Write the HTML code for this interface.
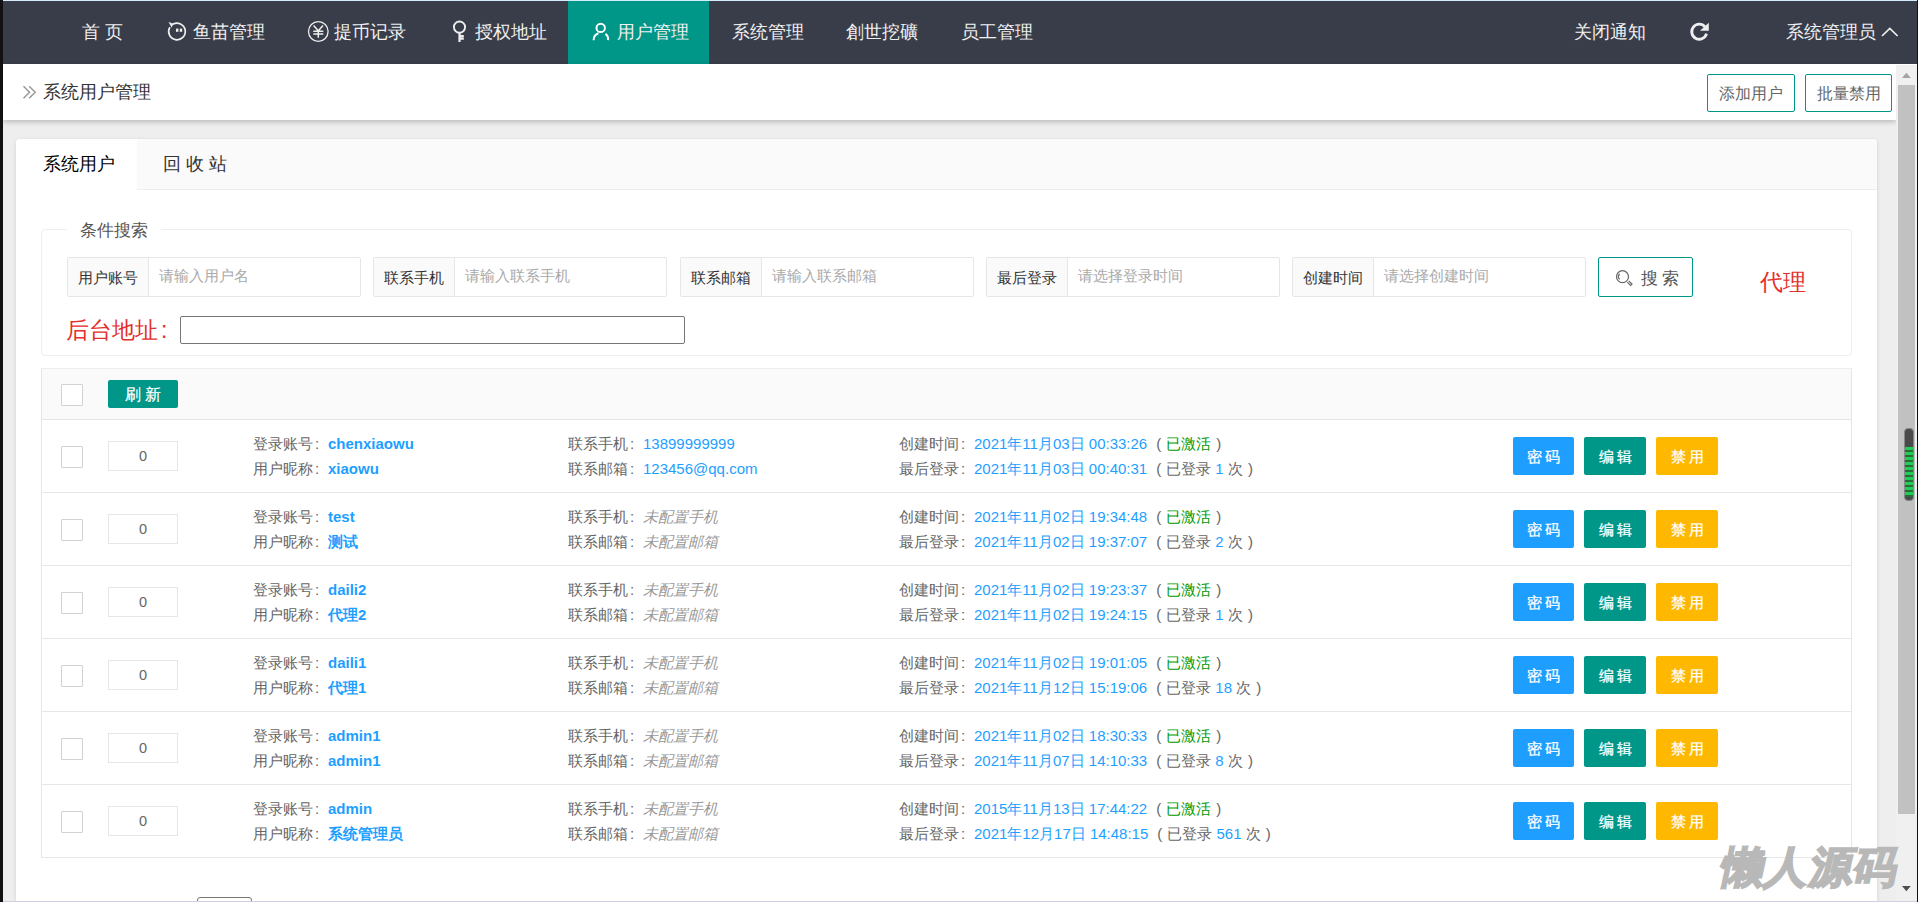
<!DOCTYPE html>
<html><head><meta charset="utf-8">
<style>
*{box-sizing:border-box;margin:0;padding:0}
html,body{width:1918px;height:902px;overflow:hidden}
body{position:relative;background:#111;font-family:"Liberation Sans",sans-serif;color:#333}
body div{position:absolute;white-space:nowrap}
.nt{top:1px;height:63px;line-height:63px;font-size:18px;color:#f0f0f0}
.btn-o{border:1px solid #009688;border-radius:2px;background:#fff;color:#555;font-size:14px;text-align:center}
.ig{top:257px;height:40px;width:294px;border:1px solid #e6e6e6;border-radius:2px;background:#fff}
.ig .lb{left:0;top:0;width:81px;height:38px;background:#fafafa;border-right:1px solid #e6e6e6;font-size:15px;color:#333;line-height:40px;text-align:center}
.ig .ph{left:91px;top:0;height:38px;line-height:36px;font-size:15px;color:#aaa}
.rl{left:41px;width:1811px;height:1px;background:#e6e6e6}
.cb{width:22px;height:22px;border:1px solid #d2d2d2;border-radius:1px;background:#fff}
.num{left:108px;width:70px;height:30px;border:1px solid #e6e6e6;text-align:center;line-height:29px;font-size:14.5px;color:#666;background:#fff}
.tx{font-size:15px;line-height:25px;color:#666}
.tx span{position:static}
.v{color:#1e9fff}
.vb{color:#1e9fff;font-weight:bold}
.i{color:#999;font-style:italic}
.g{color:#009900}
.po{padding:0 5px 0 9px}
.pc{padding:0 0 0 5px}
.bt{width:61px;height:38px;border-radius:2px;color:#fff;font-size:15px;line-height:40px;text-align:center;letter-spacing:3px;text-indent:3px;-webkit-text-stroke:0.25px #fff}
.c{display:inline-block;width:15px;padding-left:2px;font-style:normal}
.tx i.c{position:static}

</style></head><body>
<div style="left:3px;top:0;width:1914px;height:1px;background:#d4ecfb"></div>
<div style="left:3px;top:1px;width:1914px;height:63px;background:#393D49"></div>
<div style="left:568px;top:1px;width:141px;height:63px;background:#009688"></div>
<div class="nt" style="left:82px">首 页</div>
<div class="nt" style="left:193px">鱼苗管理</div>
<div class="nt" style="left:334px">提币记录</div>
<div class="nt" style="left:475px">授权地址</div>
<div class="nt" style="left:617px">用户管理</div>
<div class="nt" style="left:732px">系统管理</div>
<div class="nt" style="left:846px">創世挖礦</div>
<div class="nt" style="left:961px">员工管理</div>
<div class="nt" style="left:1574px;font-size:17.6px">关闭通知</div>
<div class="nt" style="left:1786px;font-size:17.6px">系统管理员</div>

<!-- nav icons -->
<svg style="position:absolute;left:0;top:0" width="1918" height="64" viewBox="0 0 1918 64">
 <g fill="none" stroke="#eeeeee" stroke-width="1.7" stroke-linecap="butt">
  <path d="M169.9 27.15 A8.3 8.3 0 1 0 172.8 24.3"/>
  <circle cx="318.3" cy="31.5" r="9.8" stroke-width="1.3"/>
  <path d="M313.6 25.6 L318.3 30.8 L323 25.6 M313.3 31.3 H323.3 M313.3 34 H323.3 M318.3 30.8 V37.8" stroke-width="1.5"/>
  <circle cx="459.5" cy="27.1" r="5.6" stroke-width="1.9"/>
  <path d="M459.5 32.8 V42 M459.5 36.2 H463.8 M459.5 38.6 H463.8" stroke-width="2.2"/>
  <circle cx="600.7" cy="27.9" r="4.2" stroke-width="2" stroke="#fff"/>
  <path d="M593.6 40.2 A7.2 7.2 0 0 1 598.5 33.3 M605.5 33.8 A7.2 7.2 0 0 1 608.1 40.2" stroke-width="2" stroke="#fff"/>
  <path d="M1706.5 33.6 A7.5 7.5 0 1 1 1705 26.9" stroke-width="2.8"/>
  <path d="M1882 36 L1889.8 28.4 L1897.6 36" stroke-width="1.7"/>
 </g>
 <g fill="#eeeeee">
  <path d="M168.5 22 L173.5 23.8 L171.6 27.4 Z"/>
  <rect x="176" y="28.6" width="2.4" height="3.2"/>
  <rect x="179.8" y="28.6" width="2.4" height="3.2"/>
  <path d="M1708.8 22.7 V30.7 H1700 Z"/>
 </g>
</svg>
<!-- main bg -->
<div style="left:3px;top:64px;width:1893px;height:838px;background:#eeeeee"></div>
<div style="left:3px;top:64px;width:1893px;height:56px;background:#fff;box-shadow:0 2px 5px rgba(0,0,0,.22)"></div>
<div style="left:43px;top:64px;line-height:56px;font-size:17.5px;color:#333">系统用户管理</div>
<svg style="position:absolute;left:14px;top:76px" width="30" height="30" viewBox="14 76 30 30"><path d="M23.5 86.3 L29.5 92.3 L23.5 98.3 M29.2 86.3 L35.2 92.3 L29.2 98.3" fill="none" stroke="#999" stroke-width="1.5"/></svg>
<div class="btn-o" style="left:1707px;top:74px;width:88px;height:38px;line-height:38px;font-size:16px;color:#666">添加用户</div>
<div class="btn-o" style="left:1805px;top:74px;width:87px;height:38px;line-height:38px;font-size:16px;color:#666">批量禁用</div>
<!-- card -->
<div style="left:16px;top:139px;width:1861px;height:780px;background:#fff;border-radius:4px;box-shadow:0 1px 4px rgba(0,0,0,.12)"></div>
<div style="left:16px;top:139px;width:1861px;height:51px;background:#fafafa;border-bottom:1px solid #eee;border-radius:4px 4px 0 0"></div>
<div style="left:16px;top:139px;width:121px;height:51px;background:#fff;border-radius:4px 0 0 0"></div>
<div style="left:43px;top:139px;line-height:50px;font-size:17.5px;color:#000">系统用户</div>
<div style="left:163px;top:139px;line-height:50px;font-size:17.5px;color:#333">回 收 站</div>
<div style="left:41px;top:229px;width:1811px;height:127px;border:1px solid #eee;border-radius:4px"></div>
<div style="left:67px;top:219px;padding:0 13px;background:#fff;font-size:16.5px;line-height:22px;color:#555">条件搜索</div>
<div class="ig" style="left:67px"><div class="lb">用户账号</div><div class="ph">请输入用户名</div></div>
<div class="ig" style="left:373px"><div class="lb">联系手机</div><div class="ph">请输入联系手机</div></div>
<div class="ig" style="left:680px"><div class="lb">联系邮箱</div><div class="ph">请输入联系邮箱</div></div>
<div class="ig" style="left:986px"><div class="lb">最后登录</div><div class="ph">请选择登录时间</div></div>
<div class="ig" style="left:1292px"><div class="lb">创建时间</div><div class="ph">请选择创建时间</div></div>
<div class="btn-o" style="left:1598px;top:257px;width:95px;height:40px;line-height:38px;font-size:18px;letter-spacing:6px"></div>
<svg style="position:absolute;left:1605px;top:262px" width="40" height="30" viewBox="1605 262 40 30"><g fill="none" stroke="#666" stroke-width="1.2"><circle cx="1622.5" cy="276.7" r="6"/><path d="M1619.6 274 A4 4 0 0 0 1619.6 279.4"/><path d="M1627.3 282.2 L1630.6 285.5 L1632 284.1 L1628.7 280.8"/></g></svg>
<div style="left:1641px;top:257px;line-height:44px;font-size:17px;color:#555;letter-spacing:4px">搜索</div>
<div style="left:1760px;top:268px;font-size:23px;line-height:28px;color:#e4302c">代理</div>
<div style="left:66px;top:316px;font-size:23px;line-height:28px;color:#e4302c">后台地址<span style="position:static;display:inline-block;width:20px;padding-left:3px">:</span></div>
<div style="left:180px;top:316px;width:505px;height:28px;border:1px solid #767676;border-radius:2px;background:#fff"></div>
<!-- table -->
<div style="left:41px;top:368px;width:1811px;height:490px;border:1px solid #e6e6e6;border-top:1px solid #eee;background:#fff"></div>
<div style="left:42px;top:369px;width:1809px;height:51px;background:#fafafa"></div>
<div class="cb" style="left:61px;top:384px"></div>
<div style="left:108px;top:380px;width:70px;height:28px;background:#009688;border-radius:2px;color:#fff;font-size:15.5px;line-height:30px;text-align:center;letter-spacing:4px;text-indent:4px;-webkit-text-stroke:0.2px #fff">刷新</div>
<div class="rl" style="top:419px"></div>
<div class="cb" style="left:61px;top:446px"></div>
<div class="num" style="top:441px">0</div>
<div class="tx" style="left:253px;top:431px">登录账号<i class="c">:</i><span class="vb">chenxiaowu</span><br>用户昵称<i class="c">:</i><span class="vb">xiaowu</span></div>
<div class="tx" style="left:568px;top:431px">联系手机<i class="c">:</i><span class="v">13899999999</span><br>联系邮箱<i class="c">:</i><span class="v">123456@qq.com</span></div>
<div class="tx" style="left:899px;top:431px">创建时间<i class="c">:</i><span class="v">2021年11月03日 00:33:26</span><span class="po">(</span><span class="g">已激活</span><span class="pc">)</span><br>最后登录<i class="c">:</i><span class="v">2021年11月03日 00:40:31</span><span class="po">(</span>已登录 <span class="v">1</span> 次<span class="pc">)</span></div>
<div class="bt" style="left:1513px;top:437px;background:#1E9FFF">密码</div>
<div class="bt" style="left:1584px;width:62px;top:437px;background:#009688">编辑</div>
<div class="bt" style="left:1656px;width:62px;top:437px;background:#FFB800">禁用</div>
<div class="rl" style="top:492px"></div>
<div class="cb" style="left:61px;top:519px"></div>
<div class="num" style="top:514px">0</div>
<div class="tx" style="left:253px;top:504px">登录账号<i class="c">:</i><span class="vb">test</span><br>用户昵称<i class="c">:</i><span class="vb">测试</span></div>
<div class="tx" style="left:568px;top:504px">联系手机<i class="c">:</i><span class="i">未配置手机</span><br>联系邮箱<i class="c">:</i><span class="i">未配置邮箱</span></div>
<div class="tx" style="left:899px;top:504px">创建时间<i class="c">:</i><span class="v">2021年11月02日 19:34:48</span><span class="po">(</span><span class="g">已激活</span><span class="pc">)</span><br>最后登录<i class="c">:</i><span class="v">2021年11月02日 19:37:07</span><span class="po">(</span>已登录 <span class="v">2</span> 次<span class="pc">)</span></div>
<div class="bt" style="left:1513px;top:510px;background:#1E9FFF">密码</div>
<div class="bt" style="left:1584px;width:62px;top:510px;background:#009688">编辑</div>
<div class="bt" style="left:1656px;width:62px;top:510px;background:#FFB800">禁用</div>
<div class="rl" style="top:565px"></div>
<div class="cb" style="left:61px;top:592px"></div>
<div class="num" style="top:587px">0</div>
<div class="tx" style="left:253px;top:577px">登录账号<i class="c">:</i><span class="vb">daili2</span><br>用户昵称<i class="c">:</i><span class="vb">代理2</span></div>
<div class="tx" style="left:568px;top:577px">联系手机<i class="c">:</i><span class="i">未配置手机</span><br>联系邮箱<i class="c">:</i><span class="i">未配置邮箱</span></div>
<div class="tx" style="left:899px;top:577px">创建时间<i class="c">:</i><span class="v">2021年11月02日 19:23:37</span><span class="po">(</span><span class="g">已激活</span><span class="pc">)</span><br>最后登录<i class="c">:</i><span class="v">2021年11月02日 19:24:15</span><span class="po">(</span>已登录 <span class="v">1</span> 次<span class="pc">)</span></div>
<div class="bt" style="left:1513px;top:583px;background:#1E9FFF">密码</div>
<div class="bt" style="left:1584px;width:62px;top:583px;background:#009688">编辑</div>
<div class="bt" style="left:1656px;width:62px;top:583px;background:#FFB800">禁用</div>
<div class="rl" style="top:638px"></div>
<div class="cb" style="left:61px;top:665px"></div>
<div class="num" style="top:660px">0</div>
<div class="tx" style="left:253px;top:650px">登录账号<i class="c">:</i><span class="vb">daili1</span><br>用户昵称<i class="c">:</i><span class="vb">代理1</span></div>
<div class="tx" style="left:568px;top:650px">联系手机<i class="c">:</i><span class="i">未配置手机</span><br>联系邮箱<i class="c">:</i><span class="i">未配置邮箱</span></div>
<div class="tx" style="left:899px;top:650px">创建时间<i class="c">:</i><span class="v">2021年11月02日 19:01:05</span><span class="po">(</span><span class="g">已激活</span><span class="pc">)</span><br>最后登录<i class="c">:</i><span class="v">2021年11月12日 15:19:06</span><span class="po">(</span>已登录 <span class="v">18</span> 次<span class="pc">)</span></div>
<div class="bt" style="left:1513px;top:656px;background:#1E9FFF">密码</div>
<div class="bt" style="left:1584px;width:62px;top:656px;background:#009688">编辑</div>
<div class="bt" style="left:1656px;width:62px;top:656px;background:#FFB800">禁用</div>
<div class="rl" style="top:711px"></div>
<div class="cb" style="left:61px;top:738px"></div>
<div class="num" style="top:733px">0</div>
<div class="tx" style="left:253px;top:723px">登录账号<i class="c">:</i><span class="vb">admin1</span><br>用户昵称<i class="c">:</i><span class="vb">admin1</span></div>
<div class="tx" style="left:568px;top:723px">联系手机<i class="c">:</i><span class="i">未配置手机</span><br>联系邮箱<i class="c">:</i><span class="i">未配置邮箱</span></div>
<div class="tx" style="left:899px;top:723px">创建时间<i class="c">:</i><span class="v">2021年11月02日 18:30:33</span><span class="po">(</span><span class="g">已激活</span><span class="pc">)</span><br>最后登录<i class="c">:</i><span class="v">2021年11月07日 14:10:33</span><span class="po">(</span>已登录 <span class="v">8</span> 次<span class="pc">)</span></div>
<div class="bt" style="left:1513px;top:729px;background:#1E9FFF">密码</div>
<div class="bt" style="left:1584px;width:62px;top:729px;background:#009688">编辑</div>
<div class="bt" style="left:1656px;width:62px;top:729px;background:#FFB800">禁用</div>
<div class="rl" style="top:784px"></div>
<div class="cb" style="left:61px;top:811px"></div>
<div class="num" style="top:806px">0</div>
<div class="tx" style="left:253px;top:796px">登录账号<i class="c">:</i><span class="vb">admin</span><br>用户昵称<i class="c">:</i><span class="vb">系统管理员</span></div>
<div class="tx" style="left:568px;top:796px">联系手机<i class="c">:</i><span class="i">未配置手机</span><br>联系邮箱<i class="c">:</i><span class="i">未配置邮箱</span></div>
<div class="tx" style="left:899px;top:796px">创建时间<i class="c">:</i><span class="v">2015年11月13日 17:44:22</span><span class="po">(</span><span class="g">已激活</span><span class="pc">)</span><br>最后登录<i class="c">:</i><span class="v">2021年12月17日 14:48:15</span><span class="po">(</span>已登录 <span class="v">561</span> 次<span class="pc">)</span></div>
<div class="bt" style="left:1513px;top:802px;background:#1E9FFF">密码</div>
<div class="bt" style="left:1584px;width:62px;top:802px;background:#009688">编辑</div>
<div class="bt" style="left:1656px;width:62px;top:802px;background:#FFB800">禁用</div>

<!-- scrollbar -->
<div style="left:197px;top:897px;width:55px;height:10px;border:1px solid #777;border-radius:3px;background:#fff"></div>
<div style="left:1896px;top:64px;width:21px;height:838px;background:#f0f0f0;border-top:1px solid #fff"></div>
<svg style="position:absolute;left:1896px;top:64px" width="21" height="838" viewBox="1896 64 21 838"><path d="M1902 78 L1906.4 72.8 L1910.8 78 Z" fill="#a3a3a3"/><path d="M1902 886 L1906.4 891.2 L1910.8 886 Z" fill="#505050"/></svg>
<div style="left:1898px;top:85px;width:17px;height:729px;background:#c1c1c1"></div>
<div style="left:1904px;top:428px;width:10px;height:73px;background:#4a4a4a;border-radius:4px;border:1px solid #888"></div>
<div style="left:1905px;top:447px;width:8px;height:50px;background:repeating-linear-gradient(#22cc55 0,#22cc55 3px,#2a6a3a 3px,#2a6a3a 5px)"></div>
<div style="left:1722px;top:837px;font-size:43px;line-height:60px;font-weight:bold;color:#b8b8b8;transform:skewX(-12deg);letter-spacing:1.5px;-webkit-text-stroke:2px #b8b8b8;text-shadow:0 0 1px #fff,1px 1px 1px #fff,-1px -1px 1px #fff">懒人源码</div>
<div style="left:3px;top:901px;width:1914px;height:1px;background:#d0d0e2"></div>
<div style="left:0;top:0;width:3px;height:902px;background:#111"></div>
<div style="left:1917px;top:0;width:1px;height:902px;background:#111"></div>

</body></html>
